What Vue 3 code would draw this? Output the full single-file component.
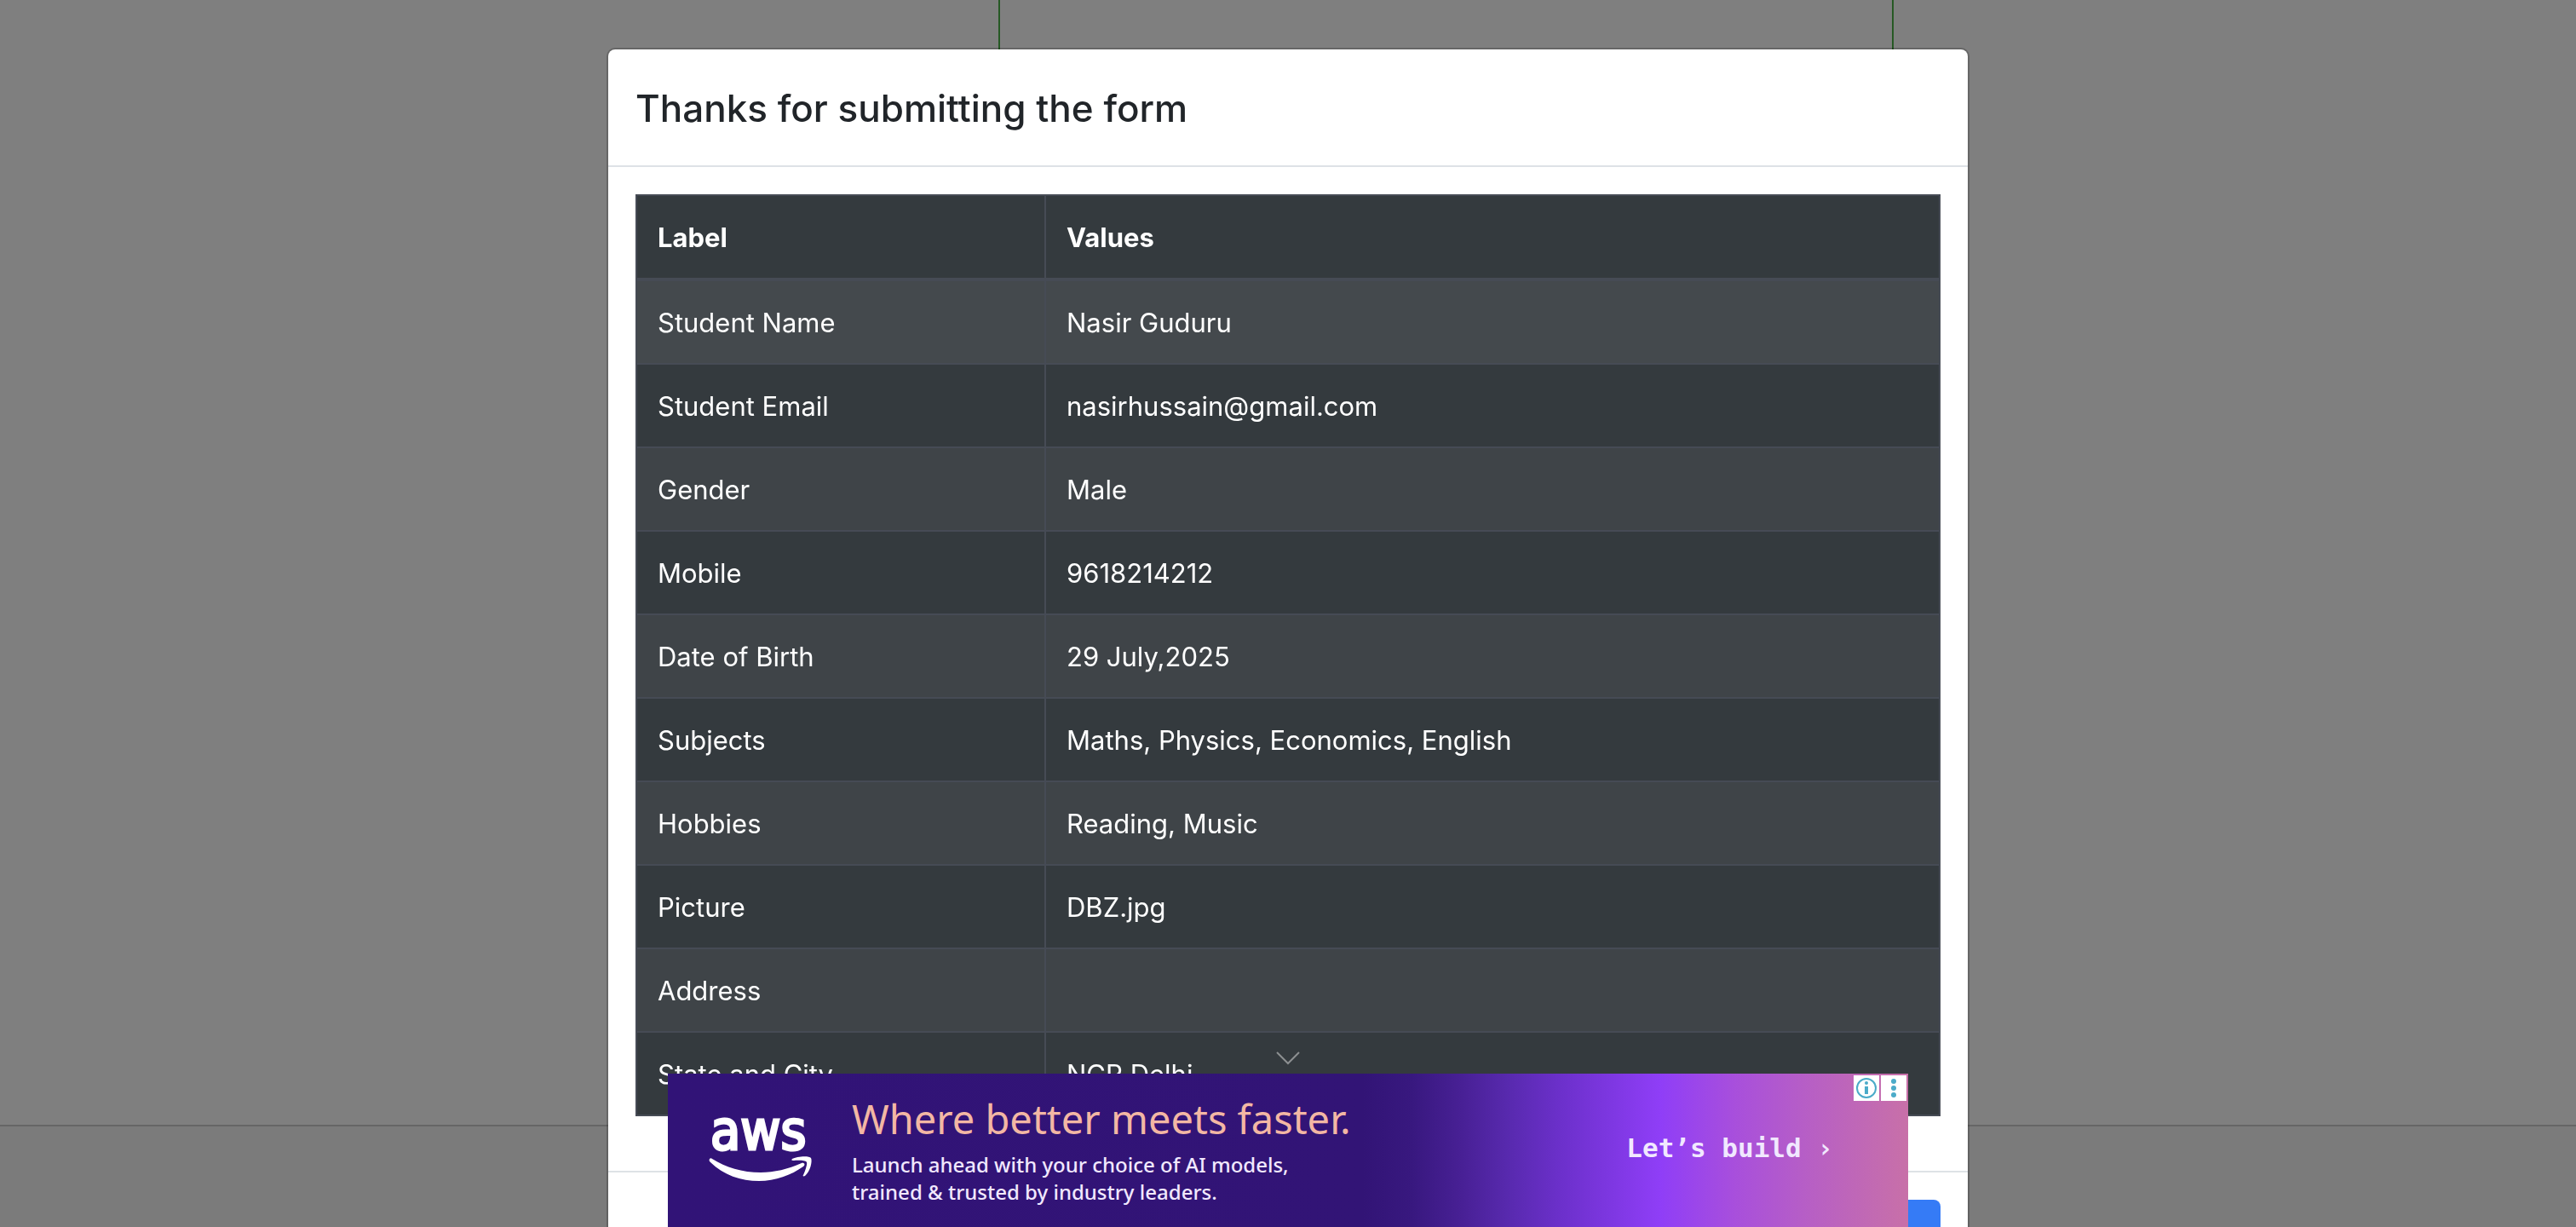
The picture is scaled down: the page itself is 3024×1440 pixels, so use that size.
<script setup>
const rows = [
  { label: 'Student Name', value: 'Nasir Guduru' },
  { label: 'Student Email', value: 'nasirhussain@gmail.com' },
  { label: 'Gender', value: 'Male' },
  { label: 'Mobile', value: '9618214212' },
  { label: 'Date of Birth', value: '29 July,2025' },
  { label: 'Subjects', value: 'Maths, Physics, Economics, English' },
  { label: 'Hobbies', value: 'Reading, Music' },
  { label: 'Picture', value: 'DBZ.jpg' },
  { label: 'Address', value: '' },
  { label: 'State and City', value: 'NCR Delhi' },
]
</script>

<template>
  <div class="page">
    <div class="page-body">
      <div class="form-column"></div>
    </div>
    <footer class="page-footer"></footer>
  </div>

  <div class="backdrop"></div>

  <div class="modal" role="dialog" aria-modal="true" aria-labelledby="modal-title">
    <div class="modal-content">
      <header class="modal-header">
        <h1 id="modal-title">Thanks for submitting the form</h1>
      </header>
      <div class="modal-body">
        <table>
          <thead>
            <tr>
              <th scope="col" class="col-label">Label</th>
              <th scope="col">Values</th>
            </tr>
          </thead>
          <tbody>
            <tr v-for="(row, i) in rows" :key="row.label" :class="{ hovered: i === 0 }">
              <td>{{ row.label }}</td>
              <td>{{ row.value }}</td>
            </tr>
          </tbody>
        </table>
      </div>
      <footer class="modal-footer">
        <button type="button" class="close" aria-label="Close"></button>
      </footer>
    </div>
  </div>

  <aside class="ad">
    <button type="button" class="collapse" aria-label="Collapse ad">
      <svg width="28" height="16" viewBox="0 0 28 16" fill="none" stroke="#8c8f91" stroke-width="2">
        <path d="M1 1 L14 14 L27 1" />
      </svg>
    </button>
    <a class="banner" href="#">
      <svg class="logo" width="122" height="80" viewBox="0 0 122 80" role="img" aria-label="aws">
        <text x="2" y="39" class="logo-text">aws</text>
        <path
          fill="#fff"
          d="M1 50 C0 52 1 53 2 54 C17 69 38 76 59 76 C78 76 97 69 111 59 C114 57 112 54 109 55 C93 62 77 66 61 66 C39 66 20 60 4 50 C3 49 2 49 1 50 Z"
        />
        <path
          fill="#fff"
          d="M98 50 C103 47 118 46 120 49 C122 53 119 65 113 70 C111 71 110 70 111 69 C113 65 116 56 115 54 C113 51 103 52 99 52 C97 52 97 51 98 50 Z"
        />
      </svg>
      <span class="copy">
        <strong>Where better meets faster.</strong>
        <span>Launch ahead with your choice of AI models,</span>
        <span>trained &amp; trusted by industry leaders.</span>
      </span>
      <span class="cta">Let’s build ›</span>
    </a>
    <div class="ad-controls">
      <button type="button" aria-label="Ad information">
        <svg width="30" height="30" viewBox="0 0 30 30" fill="#4babc9">
          <circle cx="15" cy="15" r="11" fill="none" stroke="#4babc9" stroke-width="2" />
          <circle cx="15" cy="9" r="2" />
          <rect x="13" y="13" width="4" height="9" />
        </svg>
      </button>
      <button type="button" aria-label="Ad options">
        <svg width="30" height="30" viewBox="0 0 30 30" fill="#4babc9">
          <circle cx="15" cy="7" r="3" />
          <circle cx="15" cy="15" r="3" />
          <circle cx="15" cy="23" r="3" />
        </svg>
      </button>
    </div>
  </aside>
</template>

<style>
body {
  margin: 0;
  overflow: hidden;
}
</style>

<style scoped>
* {
  box-sizing: border-box;
}

.page {
  display: flex;
  flex-direction: column;
  height: 100vh;
  background: #fff;
}

.page-body {
  flex: 1;
  display: grid;
  grid-template-columns: 1172fr 1051fr 801fr;
}

.form-column {
  grid-column: 2;
  border: solid #4cb248;
  border-width: 0 2px;
}

.page-footer {
  height: 120px;
  border-top: 2px solid #ccc;
  background: #f6f6f6;
}

.backdrop {
  position: fixed;
  inset: 0;
  background: rgba(0, 0, 0, 0.5);
}

.modal {
  position: fixed;
  inset: 0;
  overflow: hidden;
  padding: 56px 24px;
  font-family: Inter, "Liberation Sans", sans-serif;
  font-size: 31px;
  line-height: 48px;
  color: #212529;
}

.modal-content {
  max-width: 1600px;
  margin: 0 auto;
  background: #fff;
  background-clip: padding-box;
  border: 2px solid rgba(0, 0, 0, 0.2);
  border-radius: 10px;
}

.modal-header {
  padding: 33px 32px 31px;
  border-bottom: 2px solid #dee2e6;
}

h1 {
  margin: 0;
  font-size: 44px;
  font-weight: 500;
  line-height: 72px;
}

.modal-body {
  padding: 32px;
}

table {
  width: 100%;
  margin-bottom: 32px;
  border-collapse: collapse;
  background: #343a3e;
  color: #fff;
}

th,
td {
  height: 98px;
  padding: 25px 24px 23px;
  border: 2px solid #464b55;
  text-align: left;
}

th {
  font-weight: 700;
  border-bottom-width: 4px;
}

.col-label {
  width: 480px;
}

tbody tr:nth-child(odd) {
  background: #3f4448;
}

tbody tr.hovered {
  background: #44494d;
}

.modal-footer {
  display: flex;
  justify-content: flex-end;
  padding: 32px;
  border-top: 2px solid #dee2e6;
}

.close {
  width: 132px;
  height: 76px;
  border: 0;
  border-radius: 8px;
  background: #357bf6;
}

.ad {
  position: fixed;
  bottom: 0;
  left: 0;
  right: 0;
  width: 1456px;
  max-width: 100%;
  margin: 0 auto;
}

.collapse {
  display: flex;
  margin: 0 auto 10px;
  padding: 0;
  border: 0;
  background: none;
}

.banner {
  display: flex;
  align-items: center;
  gap: 46px;
  height: 180px;
  padding: 0 88px 0 48px;
  background: linear-gradient(
    90deg,
    #311377 0%,
    #321476 56%,
    #38187f 60%,
    #482095 64%,
    #592ab0 68%,
    #6c30cb 72%,
    #8f3ef7 80%,
    #a84fdc 86%,
    #b75fc5 92%,
    #c870a8 100%
  );
  color: #f1e8ff;
  text-decoration: none;
}

.logo {
  overflow: visible;
}

.logo-text {
  font-family: "DejaVu Sans Condensed", "Open Sans", sans-serif;
  font-size: 64px;
  fill: #fff;
  stroke: #fff;
  stroke-width: 3px;
}

.copy {
  display: flex;
  flex-direction: column;
  font-family: "Noto Sans", sans-serif;
  font-size: 24px;
  font-weight: 500;
  line-height: 32px;
}

.copy strong {
  margin-bottom: 10px;
  font-size: 47px;
  font-weight: 400;
  line-height: 56px;
  color: #f3b7a4;
}

.cta {
  margin-left: auto;
  padding-bottom: 6px;
  font-family: "DejaVu Sans Mono", monospace;
  font-size: 31px;
  font-weight: 700;
}

.ad-controls {
  position: absolute;
  right: 2px;
  bottom: 148px;
  display: flex;
  gap: 2px;
}

.ad-controls button {
  display: flex;
  padding: 0;
  border: 0;
  background: #fff;
}
</style>
